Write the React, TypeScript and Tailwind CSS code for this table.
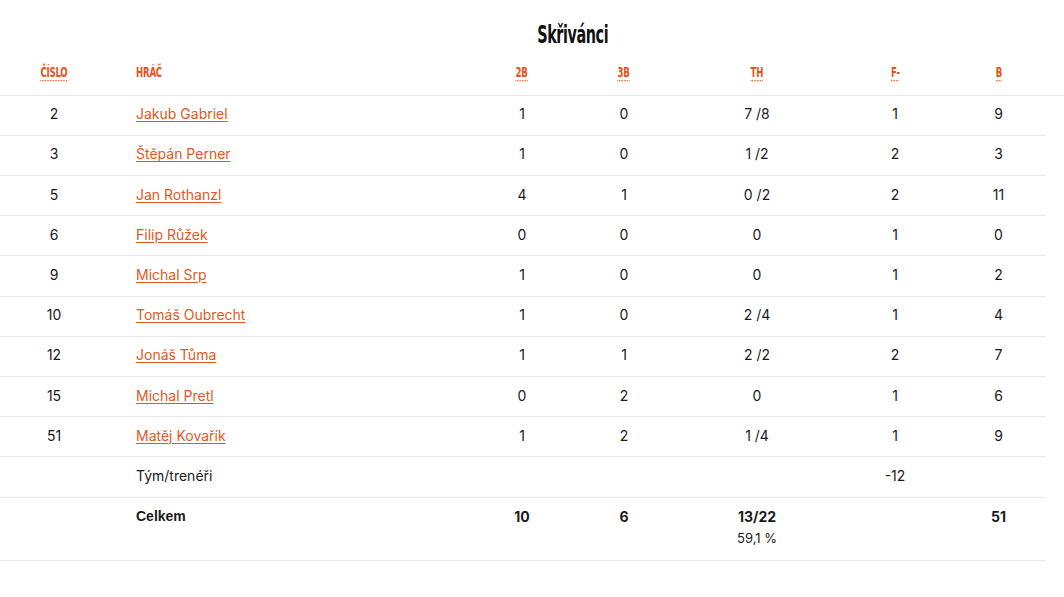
import React from "react";

const rows = [
  { n: "2", name: "Jakub Gabriel", b2: "1", b3: "0", th: "7 /8", f: "1", b: "9" },
  { n: "3", name: "Štěpán Perner", b2: "1", b3: "0", th: "1 /2", f: "2", b: "3" },
  { n: "5", name: "Jan Rothanzl", b2: "4", b3: "1", th: "0 /2", f: "2", b: "11" },
  { n: "6", name: "Filip Růžek", b2: "0", b3: "0", th: "0", f: "1", b: "0" },
  { n: "9", name: "Michal Srp", b2: "1", b3: "0", th: "0", f: "1", b: "2" },
  { n: "10", name: "Tomáš Oubrecht", b2: "1", b3: "0", th: "2 /4", f: "1", b: "4" },
  { n: "12", name: "Jonáš Tůma", b2: "1", b3: "1", th: "2 /2", f: "2", b: "7" },
  { n: "15", name: "Michal Pretl", b2: "0", b3: "2", th: "0", f: "1", b: "6" },
  { n: "51", name: "Matěj Kovařík", b2: "1", b3: "2", th: "1 /4", f: "1", b: "9" },
];

const cond = { fontFamily: '"DejaVu Sans Condensed", "Liberation Sans", sans-serif' };

const Head = ({ children, dotted = true, left = false }: { children: React.ReactNode; dotted?: boolean; left?: boolean }) => (
  <span
    style={cond}
    className={
      "inline-block text-[12px] font-bold uppercase tracking-tight text-[#e4531b] scale-x-[0.8] scale-y-[1.15] " +
      (left ? "origin-left " : "") +
      (dotted ? "underline decoration-dotted decoration-[#e4531b] underline-offset-[3px]" : "")
    }
  >
    {children}
  </span>
);

const App = () => {
  const td = "border-b border-[#e6e6e6] h-[40.2px] p-0 pb-[3px] align-middle";
  return (
    <div className="w-[1064px] h-[597px] bg-white text-[14px] text-[#1a1a1a]" style={{ fontFamily: "Inter, sans-serif" }}>
      <div className="h-[55px] flex items-start justify-center pl-[82px] pt-[25px]">
        <h2 style={cond} className="text-[21px] font-bold text-[#111] leading-none scale-x-[0.76] scale-y-[1.15] tracking-tight">
          Skřivánci
        </h2>
      </div>
      <table className="table-fixed border-collapse w-[1064px]">
        <colgroup>
          <col className="w-[108px]" />
          <col className="w-[363px]" />
          <col className="w-[102px]" />
          <col className="w-[102px]" />
          <col className="w-[164px]" />
          <col className="w-[112px]" />
          <col className="w-[95px]" />
          <col className="w-[18px]" />
        </colgroup>
        <thead>
          <tr>
            <th className={td + " pb-[8px] text-center"}><Head>Číslo</Head></th>
            <th className={td + " pb-[8px] text-left pl-[28px]"}><Head dotted={false} left>Hráč</Head></th>
            <th className={td + " pb-[8px] text-center"}><Head>2B</Head></th>
            <th className={td + " pb-[8px] text-center"}><Head>3B</Head></th>
            <th className={td + " pb-[8px] text-center"}><Head>TH</Head></th>
            <th className={td + " pb-[8px] text-center"}><Head>F-</Head></th>
            <th className={td + " pb-[8px] text-center"}><Head>B</Head></th>
            <th className={td}></th>
          </tr>
        </thead>
        <tbody>
          {rows.map((r) => (
            <tr key={r.n}>
              <td className={td + " text-center"}>{r.n}</td>
              <td className={td + " pl-[28px]"}>
                <a href="#" className="text-[#e2581f] underline underline-offset-2">{r.name}</a>
              </td>
              <td className={td + " text-center"}>{r.b2}</td>
              <td className={td + " text-center"}>{r.b3}</td>
              <td className={td + " text-center"}>{r.th}</td>
              <td className={td + " text-center"}>{r.f}</td>
              <td className={td + " text-center"}>{r.b}</td>
              <td className="p-0"></td>
            </tr>
          ))}
          <tr>
            <td className={td}></td>
            <td className={td + " pl-[28px]"}>Tým/trenéři</td>
            <td className={td}></td>
            <td className={td}></td>
            <td className={td}></td>
            <td className={td + " text-center"}>-12</td>
            <td className={td}></td>
            <td className="p-0"></td>
          </tr>
          <tr className="font-bold">
            <td className={td + " h-[63px] align-top pt-[8px]"}></td>
            <td className={td + " align-top pt-[8px] pl-[28px]"} style={{ fontFamily: '"Liberation Sans", Arial, sans-serif' }}>Celkem</td>
            <td className={td + " align-top pt-[8px] text-center"}>10</td>
            <td className={td + " align-top pt-[8px] text-center"}>6</td>
            <td className={td + " align-top pt-[8px] text-center"}>
              <div>13/22</div>
              <div className="font-normal text-[13px] mt-[2px]">59,1 %</div>
            </td>
            <td className={td}></td>
            <td className={td + " align-top pt-[8px] text-center"}>51</td>
            <td className="p-0"></td>
          </tr>
        </tbody>
      </table>
    </div>
  );
};

export default App;
